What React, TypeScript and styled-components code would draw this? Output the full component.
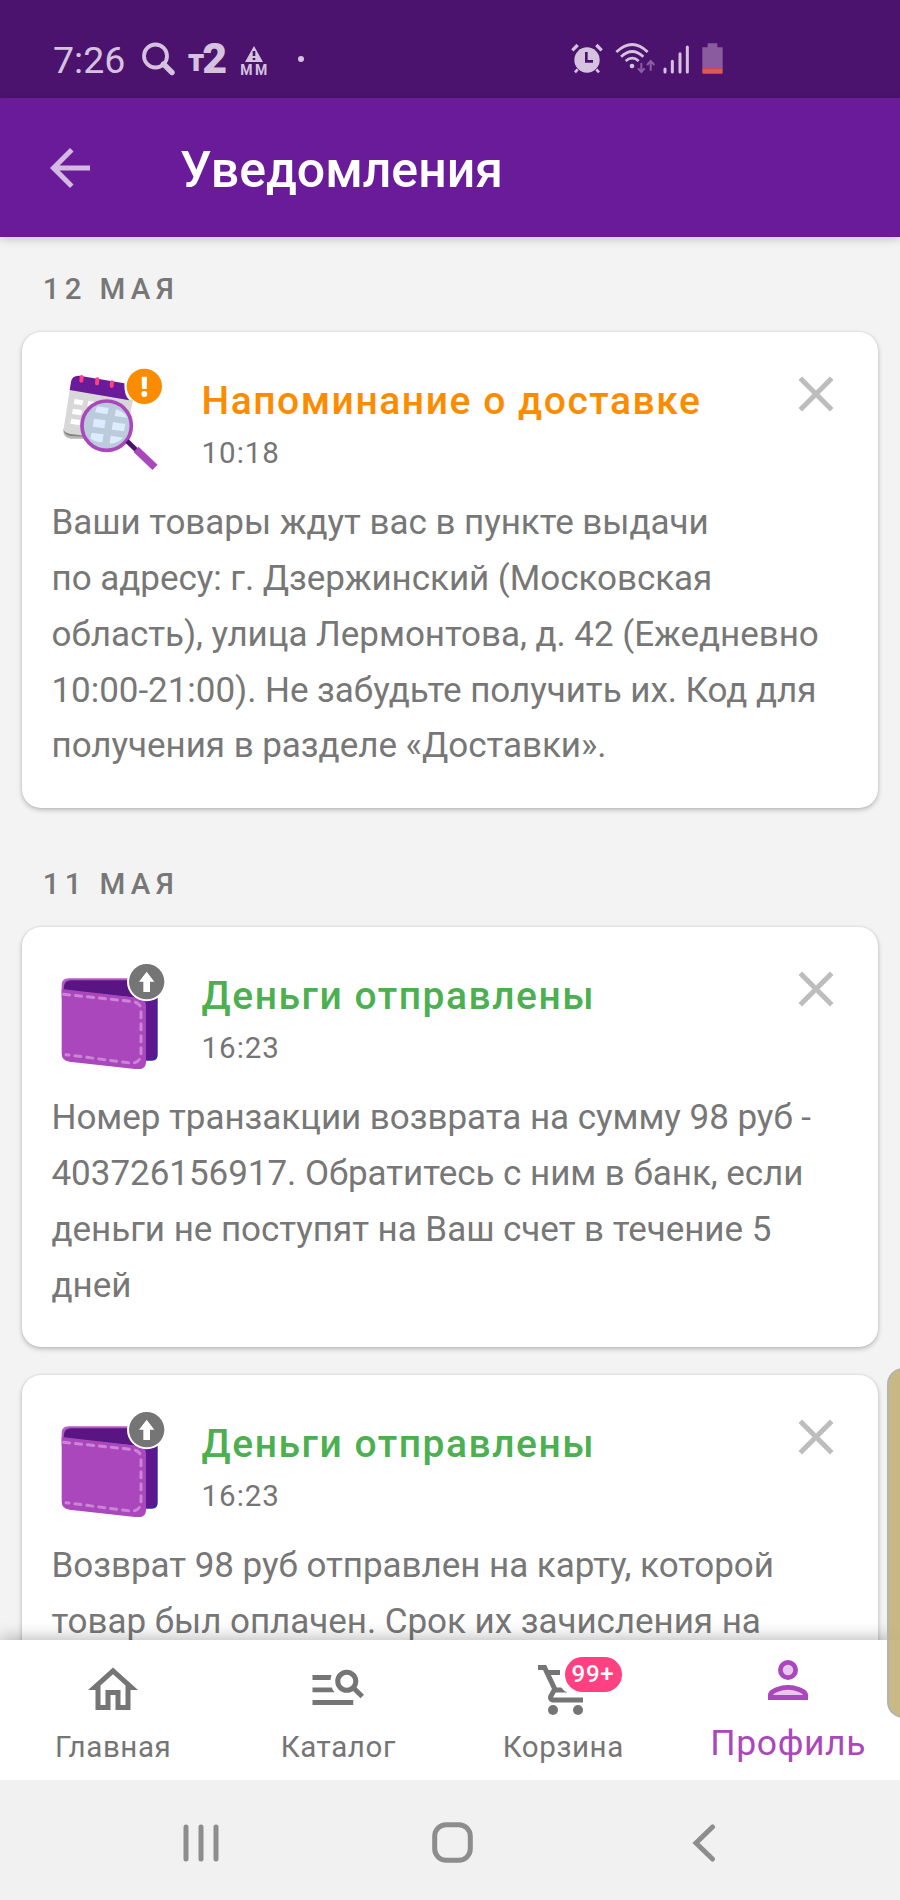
import React from "react";
import styled, { createGlobalStyle } from "styled-components";

const GlobalStyle = createGlobalStyle`
  * { box-sizing: border-box; }
  html, body { margin: 0; padding: 0; }
  body { font-family: Roboto, "Noto Sans", sans-serif; background: #f3f3f3; }
  svg { display: block; flex: none; }
`;

const Screen = styled.div`
  position: relative;
  display: flex;
  flex-direction: column;
  width: 900px;
  height: 1900px;
  overflow: hidden;
  background: #f3f3f3;
`;

const StatusBar = styled.div`
  display: flex;
  align-items: center;
  flex: none;
  height: 98px;
  padding: 20px 177px 0 53px;
  background: #4b136e;
  color: #d5c2df;
`;

const Clock = styled.div`
  width: 89px;
  padding-top: 2px;
  font-size: 37.5px;
  line-height: 44px;
`;

const OperatorMark = styled.div`
  display: flex;
  align-items: flex-end;
  width: 52px;
  height: 33px;
  margin-left: 13px;
`;

const OperatorLetter = styled.span<{ $size: number; $line: number }>`
  font-weight: 900;
  font-size: ${(p) => p.$size}px;
  line-height: ${(p) => p.$line}px;
  letter-spacing: -2px;
`;

const AlertMark = styled.div`
  display: flex;
  flex-direction: column;
  align-items: center;
  width: 28px;
  padding-top: 3px;
  font-size: 14px;
  line-height: 14px;
  font-weight: 700;
  letter-spacing: 2.5px;
  text-indent: 2px;
`;

const Dot = styled.div`
  width: 6px;
  height: 6px;
  margin-left: 30px;
  border-radius: 50%;
  background: currentColor;
`;

const StatusIcons = styled.div`
  display: flex;
  margin: 0 0 2px auto;
`;

const StatusGlyph = styled.svg<{ $gap: number }>`
  margin-left: ${(p) => p.$gap}px;
`;

const Header = styled.header`
  position: relative;
  z-index: 1;
  display: flex;
  align-items: center;
  flex: none;
  height: 139px;
  padding-left: 40px;
  background: #6a1b9a;
  box-shadow: 0 2px 9px rgba(0, 0, 0, 0.2);
`;

const HeaderTitle = styled.h1`
  margin: 0 0 0 80px;
  padding-top: 5px;
  font-size: 50px;
  line-height: 59px;
  font-weight: 500;
  color: #fff;
`;

const Feed = styled.main`
  flex: 1;
  min-height: 0;
  overflow: hidden;
  padding: 34.3px 21.7px 0;
`;

const Day = styled.section`
  margin-bottom: 58.7px;
`;

const DayLabel = styled.h2`
  margin: 0 0 24.7px 21px;
  font-size: 29.5px;
  line-height: 36px;
  font-weight: 500;
  letter-spacing: 5.3px;
  color: #777;
`;

const Card = styled.article`
  padding: 32px 32px 33.4px 29.8px;
  margin-bottom: 28.5px;
  border-radius: 19px;
  background: #fff;
  box-shadow: 0 2px 5px rgba(0, 0, 0, 0.24), 0 0 2px rgba(0, 0, 0, 0.1);
`;

const CardHead = styled.div`
  display: flex;
  align-items: flex-start;
  padding-left: 8.5px;
  margin-bottom: 21.2px;
`;

const Heading = styled.div`
  flex: 1;
  padding: 13.7px 0 0 31.5px;
`;

const Title = styled.h3<{ $color: string }>`
  margin: 0 0 11.3px;
  font-size: 39px;
  line-height: 46px;
  font-weight: 500;
  letter-spacing: 1.55px;
  white-space: nowrap;
  color: ${(p) => p.$color};
`;

const Time = styled.div`
  font-size: 29.5px;
  line-height: 36px;
  letter-spacing: 1px;
  color: #757575;
`;

const Body = styled.p`
  margin: 0;
  font-size: 35px;
  line-height: 55.8px;
  letter-spacing: -0.04px;
  white-space: pre;
  color: #777;
`;

const TabBar = styled.nav`
  position: relative;
  z-index: 1;
  display: grid;
  grid-template-columns: repeat(4, 225px);
  flex: none;
  height: 140px;
  background: #fff;
  box-shadow: 0 -2px 16px rgba(0, 0, 0, 0.28);
`;

const Tab = styled.div<{ $active?: boolean }>`
  display: flex;
  flex-direction: column;
  align-items: center;
  padding-top: ${(p) => (p.$active ? 10 : 20)}px;
  color: ${(p) => (p.$active ? "#ab47bc" : "#757575")};
`;

const IconSlot = styled.div`
  position: relative;
`;

const TabLabel = styled.span<{ $active?: boolean }>`
  margin-top: ${(p) => (p.$active ? 12 : 9)}px;
  padding-left: 1.5px;
  font-size: ${(p) => (p.$active ? 35.5 : 29.5)}px;
  line-height: ${(p) => (p.$active ? 42 : 36)}px;
  letter-spacing: 0.6px;
`;

const Badge = styled.span`
  position: absolute;
  left: 32px;
  top: -3px;
  width: 57px;
  height: 35px;
  border-radius: 18px;
  background: #ff4081;
  color: #fff;
  font-size: 24px;
  font-weight: 500;
  line-height: 35px;
  letter-spacing: 0.8px;
  text-align: center;
`;

const EdgeHandle = styled.div`
  position: absolute;
  z-index: 3;
  left: 887px;
  top: 1368px;
  width: 40px;
  height: 350px;
  border: 2px solid #b4b4ae;
  border-radius: 16px;
  background: rgba(195, 178, 120, 0.9);
`;

const SystemNav = styled.div`
  position: relative;
  z-index: 2;
  display: flex;
  align-items: center;
  flex: none;
  height: 120px;
  padding: 5px 184px 0 183px;
  justify-content: space-between;
  background: #f1f1f1;
  color: #8d8d8d;
`;

const HomeButton = styled.svg`
  margin-right: 7px;
`;

const SearchGlyph = () => (
  <StatusGlyph $gap={0} width="33" height="34" viewBox="0 0 33 34" fill="none" stroke="currentColor">
    <circle cx="13.5" cy="14" r="11.5" strokeWidth="3.8" />
    <path d="M21.5 22 L30 30.5" strokeWidth="5.4" strokeLinecap="round" />
  </StatusGlyph>
);

const AlarmGlyph = () => (
  <StatusGlyph $gap={0} width="32" height="31" viewBox="0 0 96 93" fill="none" stroke="currentColor">
    <circle cx="48" cy="51" r="38" fill="currentColor" stroke="none" />
    <path d="M4 22 L20 6 M92 22 L76 6" strokeWidth="10" />
    <path d="M20 79 L12 88 M76 79 L84 88" strokeWidth="8" />
    <path d="M46 27 V55 H66" stroke="#4b136e" strokeWidth="8" />
  </StatusGlyph>
);

const WifiGlyph = () => (
  <StatusGlyph $gap={12} width="41" height="31" viewBox="0 0 123 93" fill="none" stroke="currentColor">
    <path d="M4 27 Q52 -18 98 27" strokeWidth="8" />
    <path d="M18 41 Q52 10 85 41" strokeWidth="8" />
    <path d="M32 54 Q52 37 71 54" strokeWidth="8" />
    <circle cx="51" cy="69" r="7" fill="currentColor" stroke="none" />
    <path d="M79 60 V87 M69 76 L79 87 L89 76 M107 83 V55 M96 66 L107 54 L118 66" stroke="#8a5fa5" strokeWidth="6" />
  </StatusGlyph>
);

const SignalGlyph = () => (
  <StatusGlyph $gap={7} width="27" height="31" viewBox="0 0 81 93" stroke="currentColor" strokeWidth="9" strokeLinecap="round">
    <path d="M6 78 V87 M28 55 V87 M51 32 V87 M73 12 V87" />
  </StatusGlyph>
);

const BatteryGlyph = () => (
  <StatusGlyph $gap={12} width="21" height="31" viewBox="0 0 63 93">
    <path d="M17 1 H46 V13 H62 V76 H1 V13 H17 Z" fill="#8a5c9f" />
    <path d="M1 76 H62 V89 Q62 92 59 92 H4 Q1 92 1 89 Z" fill="#dc5b4d" />
  </StatusGlyph>
);

const BackArrow = () => (
  <svg width="60" height="60" viewBox="0 0 24 24" fill="#d5b9e3">
    <path d="M20 11H7.83l5.59-5.59L12 4l-8 8 8 8 1.41-1.41L7.83 13H20v-2z" />
  </svg>
);

const CloseIcon = () => (
  <svg width="60" height="60" viewBox="0 0 24 24" fill="#bdbdbd">
    <path d="M19 6.41L17.59 5 12 10.59 6.41 5 5 6.41 10.59 12 5 17.59 6.41 19 12 13.41 17.59 19 19 17.59 13.41 12z" />
  </svg>
);

const CalendarArt = () => (
  <svg width="110" height="110" viewBox="150 132 330 330">
    <path d="M160 332 Q160 352 182 356 L330 358 L340 320 Z" fill="#b8b8b4" />
    <path d="M160 328 Q162 345 182 348 L330 356 L340 310 Z" fill="#858585" />
    <path d="M180 205 L161 325 Q160 338 178 341 L345 362 L369 240 Z" fill="#d8d8d8" />
    <path d="M179 210 L183 185 Q186 166 208 167 L343 190 Q342 226 358 241 Z" fill="#6a1b9a" />
    <path d="M215 171 L214 182 M262 178 L261 190 M306 187 L305 198" stroke="#ff4081" strokeWidth="12" strokeLinecap="round" />
    <g fill="#fff">
      <path d="M194 237 L220 241 L217 256 L191 252 Z" />
      <path d="M235 243 L262 247 L258 262 L232 258 Z" />
      <path d="M189 266 L216 270 L213 286 L186 282 Z" />
      <path d="M184 296 L212 300 L209 316 L181 311 Z" />
    </g>
    <circle cx="290" cy="317" r="73" fill="#bccbdb" />
    <g fill="#dcebff">
      <path d="M262 259 L296 264 L292 283 L255 277 Z" />
      <path d="M318 268 Q344 276 352 293 L314 288 Z" />
      <path d="M252 296 L287 301 L283 325 L248 320 Z" />
      <path d="M309 306 L346 312 L342 334 L305 329 Z" />
      <path d="M245 338 L281 343 L277 367 Q255 367 241 354 Z" />
      <path d="M302 347 L339 353 Q325 369 299 371 Z" />
    </g>
    <circle cx="290" cy="317" r="74" fill="none" stroke="#ab47bc" strokeWidth="11" />
    <path d="M351 363 L380 391" stroke="#4a1268" strokeWidth="14" />
    <path d="M378 388 L435 442" stroke="#ab47bc" strokeWidth="22" />
    <circle cx="403" cy="199" r="53" fill="#fb8c00" />
    <path d="M395 170 H411 L410 207 H396 Z" fill="#fff" />
    <circle cx="403" cy="222" r="9" fill="#fff" />
  </svg>
);

const WalletArt = () => (
  <svg width="110" height="110" viewBox="150 146 330 330">
    <path d="M380 240 H443 V434 Q443 451 426 451 H390 Z" fill="#3427a8" />
    <path d="M370 240 H438 V430 Q438 446 422 447 H390 Z" fill="#5f178d" />
    <path d="M155 240 V224 Q155 204 177 204 H380 V262 H155 Z" fill="#b55bc8" />
    <path d="M161 240 V232 Q162 210 184 210 H380 V262 Z" fill="#591682" />
    <path d="M155 236 L388 263 Q408 266 408 287 V456 Q407 477 384 477 L178 454 Q155 450 155 430 Z" fill="#ab47bc" />
    <path d="M161 252 L370 274 Q393 278 393 300 V430 Q392 459 362 458 L168 433" fill="none" stroke="#ca86d5" strokeWidth="9" strokeLinecap="round" strokeDasharray="18 18" />
    <circle cx="410" cy="214" r="59" fill="#fff" />
    <circle cx="410" cy="214" r="53" fill="#757575" />
    <path d="M410 184 L433 214 H420 V245 H400 V214 H387 Z" fill="#fff" />
  </svg>
);

const HomeIcon = () => (
  <svg width="60" height="60" viewBox="0 0 24 24" fill="currentColor">
    <path d="M12 5.69l5 4.5V18h-2v-6H9v6H7v-7.81l5-4.5M12 3L2 12h3v8h6v-6h2v6h6v-8h3L12 3z" />
  </svg>
);

const CatalogIcon = () => (
  <svg width="60" height="60" viewBox="0 0 24 24">
    <path d="M1.8 6H9.4Q9.1 7 9 8H1.8Z M1.8 11H9.5Q9.9 12 10.6 12.9H1.8Z M1.8 16H18.1V18H1.8Z" fill="currentColor" />
    <circle cx="15.5" cy="8.5" r="3.6" fill="none" stroke="currentColor" strokeWidth="2" />
    <path d="M17.8 10.8 L21.7 14.6" stroke="currentColor" strokeWidth="2" />
  </svg>
);

const CartIcon = () => (
  <svg width="60" height="60" viewBox="0 0 24 24" fill="currentColor">
    <path d="M2 2h3.27l.94 2H10.8v2H7.16l2.37 5H11.3q1 1.4 2.5 2H9.1L8 15h12v2H8c-1.52 0-2.48-1.63-1.75-2.97l1.35-2.44L4 4H2z" />
    <circle cx="8" cy="20" r="2" />
    <circle cx="18" cy="20" r="2" />
  </svg>
);

const ProfileIcon = () => (
  <svg width="60" height="60" viewBox="0 0 24 24" fill="currentColor">
    <circle cx="12" cy="8" r="4" />
    <circle cx="12" cy="8" r="2.1" fill="#e6c8eb" />
    <path d="M12 14c2.67 0 8 1.33 8 4v2H4v-2c0-2.67 5.33-4 8-4z" />
    <path d="M12 15.9c-2.7 0-5.8 1.3-6 2.1h12c-.2-.8-3.3-2.1-6-2.1z" fill="#e6c8eb" />
  </svg>
);

interface Notice {
  title: string;
  time: string;
  color: string;
  art: React.ReactNode;
  lines: string[];
}

const days: { label: string; notices: Notice[] }[] = [
  {
    label: "12 МАЯ",
    notices: [
      {
        title: "Напоминание о доставке",
        time: "10:18",
        color: "#fb8c00",
        art: <CalendarArt />,
        lines: [
          "Ваши товары ждут вас в пункте выдачи",
          "по адресу: г. Дзержинский (Московская",
          "область), улица Лермонтова, д. 42 (Ежедневно",
          "10:00-21:00). Не забудьте получить их. Код для",
          "получения в разделе «Доставки».",
        ],
      },
    ],
  },
  {
    label: "11 МАЯ",
    notices: [
      {
        title: "Деньги отправлены",
        time: "16:23",
        color: "#4caf50",
        art: <WalletArt />,
        lines: [
          "Номер транзакции возврата на сумму 98 руб -",
          "403726156917. Обратитесь с ним в банк, если",
          "деньги не поступят на Ваш счет в течение 5",
          "дней",
        ],
      },
      {
        title: "Деньги отправлены",
        time: "16:23",
        color: "#4caf50",
        art: <WalletArt />,
        lines: [
          "Возврат 98 руб отправлен на карту, которой",
          "товар был оплачен. Срок их зачисления на",
        ],
      },
    ],
  },
];

const NoticeCard = ({ notice }: { notice: Notice }) => (
  <Card>
    <CardHead>
      {notice.art}
      <Heading>
        <Title $color={notice.color}>{notice.title}</Title>
        <Time>{notice.time}</Time>
      </Heading>
      <CloseIcon />
    </CardHead>
    <Body>{notice.lines.join("\n")}</Body>
  </Card>
);

export default function App() {
  return (
    <>
      <GlobalStyle />
      <Screen>
        <StatusBar>
          <Clock>7:26</Clock>
          <SearchGlyph />
          <OperatorMark>
            <OperatorLetter $size={31} $line={30}>т</OperatorLetter>
            <OperatorLetter $size={43} $line={36}>2</OperatorLetter>
          </OperatorMark>
          <AlertMark>
            <svg width="20" height="18" viewBox="0 0 20 18">
              <path d="M10 1 L19 17 H1 Z" fill="currentColor" />
              <path d="M10 6 V11 M10 13 V15" stroke="#4b136e" strokeWidth="2.6" />
            </svg>
            ММ
          </AlertMark>
          <Dot />
          <StatusIcons>
            <AlarmGlyph />
            <WifiGlyph />
            <SignalGlyph />
            <BatteryGlyph />
          </StatusIcons>
        </StatusBar>
        <Header>
          <BackArrow />
          <HeaderTitle>Уведомления</HeaderTitle>
        </Header>
        <Feed>
          {days.map((day) => (
            <Day key={day.label}>
              <DayLabel>{day.label}</DayLabel>
              {day.notices.map((notice, i) => (
                <NoticeCard key={i} notice={notice} />
              ))}
            </Day>
          ))}
        </Feed>
        <TabBar>
          <Tab>
            <HomeIcon />
            <TabLabel>Главная</TabLabel>
          </Tab>
          <Tab>
            <CatalogIcon />
            <TabLabel>Каталог</TabLabel>
          </Tab>
          <Tab>
            <IconSlot>
              <CartIcon />
              <Badge>99+</Badge>
            </IconSlot>
            <TabLabel>Корзина</TabLabel>
          </Tab>
          <Tab $active>
            <ProfileIcon />
            <TabLabel $active>Профиль</TabLabel>
          </Tab>
        </TabBar>
        <SystemNav>
          <svg width="36" height="38" viewBox="0 0 36 38" stroke="currentColor" strokeWidth="5" strokeLinecap="round">
            <path d="M3 3 V35 M18 3 V35 M33 3 V35" />
          </svg>
          <HomeButton width="41" height="41" viewBox="0 0 41 41" fill="none" stroke="currentColor" strokeWidth="5">
            <rect x="2.7" y="2.7" width="35.6" height="35.6" rx="11.5" />
          </HomeButton>
          <svg width="24" height="38" viewBox="0 0 24 38" fill="none" stroke="currentColor" strokeWidth="5" strokeLinecap="round">
            <path d="M20.5 3 L4 19 L20.5 35" />
          </svg>
        </SystemNav>
        <EdgeHandle />
      </Screen>
    </>
  );
}
